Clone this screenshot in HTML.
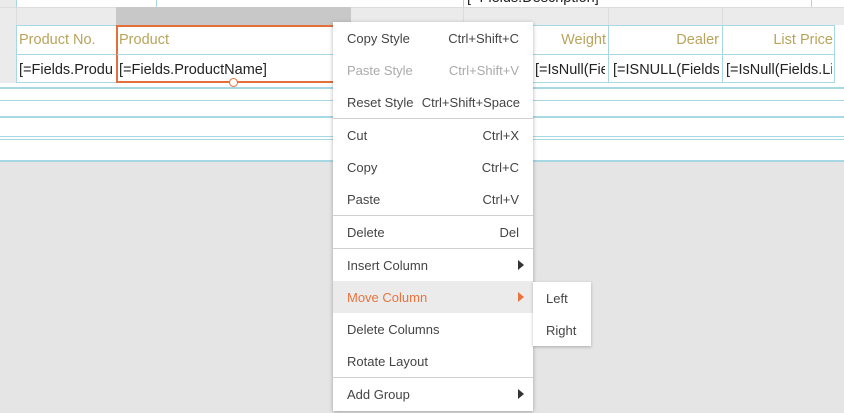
<!DOCTYPE html>
<html><head><style>
*{margin:0;padding:0;box-sizing:border-box}
body{width:844px;height:413px;overflow:hidden;background:#e5e5e5;font-family:"Liberation Sans",sans-serif;position:relative}
.a{position:absolute}
.t{font-size:14.5px;white-space:nowrap;overflow:hidden}
.h{color:#b9a45c}
.d{color:#222}
.m{position:absolute;left:333px;top:22px;width:200px;height:389px;background:#fff;box-shadow:0 1px 4px rgba(0,0,0,.3);font-size:13px;color:#444}
.i{position:absolute;left:0;width:200px;height:32px;line-height:34px;padding-left:14px}
.i span{position:absolute;right:14px}
.s{position:absolute;left:0;width:200px;height:1px;background:#d0d0d0}
.ar{position:absolute;right:9px;top:11px;width:0;height:0;border-left:6px solid #333;border-top:5px solid transparent;border-bottom:5px solid transparent}
</style></head><body>
<div class="a" style="left:0;top:0;width:844px;height:162px;background:#fff"></div>
<div class="a" style="left:0;top:0;width:16px;height:83px;background:#ebebeb"></div>
<div class="a" style="left:16px;top:0;width:1px;height:7px;background:#a8d8e4"></div>
<div class="a" style="left:156px;top:0;width:1px;height:7px;background:#a8d8e4"></div>
<div class="a" style="left:463px;top:0;width:1px;height:7px;background:#a8d8e4"></div>
<div class="a" style="left:811px;top:0;width:1px;height:7px;background:#a8d8e4"></div>
<div class="a t d" style="left:467px;top:-10px">[=Fields.Description]</div>
<div class="a" style="left:0;top:7px;width:844px;height:18px;background:#ebebeb;border-top:1px solid #ddd"></div>
<div class="a" style="left:116px;top:7px;width:235px;height:18px;background:#c8c8c8"></div>
<div class="a" style="left:16px;top:7px;width:1px;height:18px;background:#ddd"></div>
<div class="a" style="left:463px;top:7px;width:1px;height:18px;background:#ddd"></div>
<div class="a" style="left:608px;top:7px;width:1px;height:18px;background:#ddd"></div>
<div class="a" style="left:722px;top:7px;width:1px;height:18px;background:#ddd"></div>
<div class="a" style="left:16px;top:25px;width:819px;height:58px;border:1px solid #a8d8e4"></div>
<div class="a" style="left:16px;top:54px;width:819px;height:1px;background:#a8d8e4"></div>
<div class="a" style="left:530px;top:25px;width:1px;height:58px;background:#a8d8e4"></div>
<div class="a" style="left:608px;top:25px;width:1px;height:58px;background:#a8d8e4"></div>
<div class="a" style="left:722px;top:25px;width:1px;height:58px;background:#a8d8e4"></div>
<div class="a t h" style="left:19px;top:32px">Product No.</div>
<div class="a t d" style="left:19px;top:62px;width:94px">[=Fields.ProductNo]</div>
<div class="a" style="left:116px;top:25px;width:240px;height:58px;border:2px solid #e3703b"></div>
<div class="a" style="left:117px;top:54px;width:238px;height:1px;background:#a8d8e4"></div>
<div class="a t h" style="left:119px;top:32px">Product</div>
<div class="a t d" style="left:119px;top:62px">[=Fields.ProductName]</div>
<div class="a" style="left:229px;top:78px;width:9px;height:9px;border-radius:50%;border:1.5px solid #e3703b;background:#fff"></div>
<div class="a t h" style="left:531px;top:32px;width:75px;text-align:right">Weight</div>
<div class="a t d" style="left:535px;top:62px;width:70px">[=IsNull(Fields.Weight)]</div>
<div class="a t h" style="left:609px;top:32px;width:110px;text-align:right">Dealer</div>
<div class="a t d" style="left:613px;top:62px;width:106px">[=ISNULL(Fields.Dealer)]</div>
<div class="a t h" style="left:723px;top:32px;width:110px;text-align:right">List Price</div>
<div class="a t d" style="left:726px;top:62px;width:106px">[=IsNull(Fields.ListPrice)]</div>
<div class="a" style="left:0;top:87px;width:844px;height:2px;background:#a8d8e4"></div>
<div class="a" style="left:0;top:100px;width:844px;height:1px;background:#a8d8e4"></div>
<div class="a" style="left:0;top:116px;width:844px;height:2px;background:#a8d8e4"></div>
<div class="a" style="left:0;top:136px;width:844px;height:1px;background:#a8d8e4"></div>
<div class="a" style="left:0;top:139px;width:844px;height:1px;background:#a8d8e4"></div>
<div class="a" style="left:0;top:160px;width:844px;height:2px;background:#a8d8e4"></div>
<div class="m">
<div class="i" style="top:0">Copy Style<span>Ctrl+Shift+C</span></div>
<div class="i" style="top:32px;color:#aaa">Paste Style<span>Ctrl+Shift+V</span></div>
<div class="i" style="top:64px">Reset Style<span style="right:13px">Ctrl+Shift+Space</span></div>
<div class="s" style="top:96px"></div>
<div class="i" style="top:97px">Cut<span>Ctrl+X</span></div>
<div class="i" style="top:129px">Copy<span>Ctrl+C</span></div>
<div class="i" style="top:161px">Paste<span>Ctrl+V</span></div>
<div class="s" style="top:193px"></div>
<div class="i" style="top:194px">Delete<span>Del</span></div>
<div class="s" style="top:226px"></div>
<div class="i" style="top:227px">Insert Column<div class="ar"></div></div>
<div class="i" style="top:259px;background:#ebebeb;color:#e8743f">Move Column<div class="ar" style="border-left-color:#e8743f"></div></div>
<div class="i" style="top:291px">Delete Columns</div>
<div class="i" style="top:323px">Rotate Layout</div>
<div class="s" style="top:355px"></div>
<div class="i" style="top:356px">Add Group<div class="ar"></div></div>
</div>
<div class="a" style="left:533px;top:282px;width:58px;height:64px;background:#fff;box-shadow:0 1px 3px rgba(0,0,0,.25);font-size:13px;color:#444">
<div style="position:absolute;left:13px;top:9px">Left</div>
<div style="position:absolute;left:13px;top:41px">Right</div>
</div>
</body></html>
